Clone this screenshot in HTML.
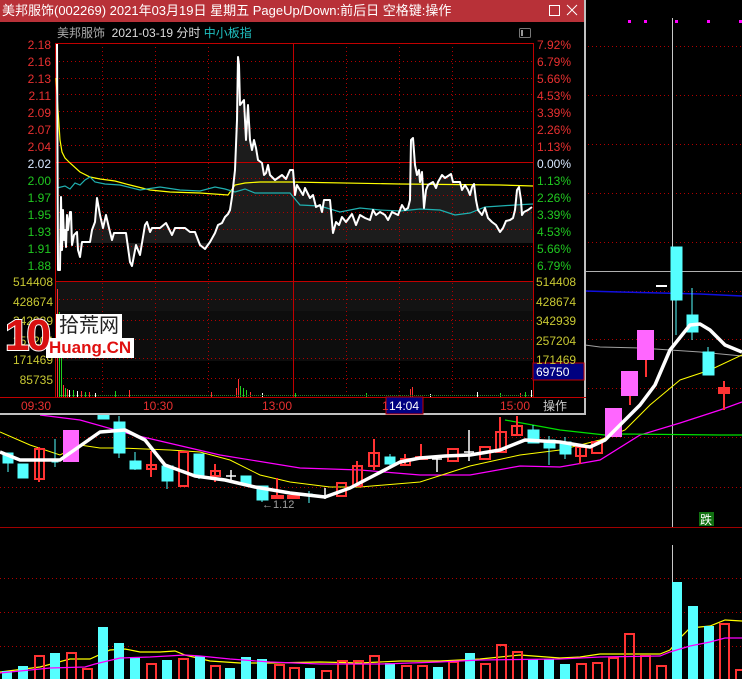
<!DOCTYPE html>
<html><head><meta charset="utf-8"><style>
html,body{margin:0;padding:0;background:#000;width:742px;height:679px;overflow:hidden;font-family:"Liberation Sans","Noto Sans CJK SC",sans-serif;}
svg{position:absolute;left:0;top:0}
.t{position:absolute;white-space:nowrap;font-size:12px;line-height:14px}
</style></head><body>
<svg width="742" height="679" viewBox="0 0 742 679">
<g stroke="#b00000" stroke-dasharray="1 3" stroke-width="1">
<line x1="0" y1="46.5" x2="742" y2="46.5"/><line x1="0" y1="95.5" x2="742" y2="95.5"/><line x1="0" y1="144.5" x2="742" y2="144.5"/><line x1="0" y1="193.5" x2="742" y2="193.5"/><line x1="0" y1="242.5" x2="742" y2="242.5"/><line x1="0" y1="291.5" x2="742" y2="291.5"/><line x1="0" y1="339.5" x2="742" y2="339.5"/><line x1="0" y1="388.5" x2="742" y2="388.5"/><line x1="0" y1="437.5" x2="742" y2="437.5"/><line x1="0" y1="487.5" x2="742" y2="487.5"/>
<line x1="0" y1="578.5" x2="742" y2="578.5"/><line x1="0" y1="612.5" x2="742" y2="612.5"/><line x1="0" y1="646.5" x2="742" y2="646.5"/>
</g>
<line x1="0" y1="527.5" x2="742" y2="527.5" stroke="#a00000"/>
<line x1="672.5" y1="18" x2="672.5" y2="527" stroke="#c8c8c8"/>
<line x1="672.5" y1="545" x2="672.5" y2="679" stroke="#c8c8c8"/>
<g fill="#ff00ff"><rect x="628" y="20" width="3" height="3"/><rect x="644" y="20" width="3" height="3"/><rect x="675" y="20" width="3" height="3"/><rect x="707" y="20" width="3" height="3"/><rect x="739" y="20" width="3" height="3"/></g>
<line x1="585" y1="271.5" x2="742" y2="271.5" stroke="#b0b0b0"/>
<polyline fill="none" stroke="#a0a0a0" points="585,345 600,347 640,348 700,352 742,356"/>
<polyline fill="none" stroke="#1010e0" stroke-width="1.5" points="585,291 620,292 700,294 742,296"/>
<polyline fill="none" stroke="#ff00ff" stroke-width="1.2" points="40,415 80,420 130,434 220,455 300,468 360,470 420,475 470,475 520,466 560,467 600,460 640,435 680,423 720,410 742,402"/>
<polyline fill="none" stroke="#00e000" stroke-width="1.2" points="505,420 560,430 605,435 620,434 720,435 742,435"/>
<polyline fill="none" stroke="#ffff00" stroke-width="1" points="0,432 30,445 60,455 80,445 100,448 120,448 170,450 200,452 230,460 260,475 290,482 330,487 360,487 420,482 470,466 520,455 560,450 600,440 625,430 650,405 680,380 710,370 742,355"/>
<g fill="#55ffff" stroke="#55ffff">
<line x1="8" y1="453" x2="8" y2="472"/><rect x="3" y="453" width="10" height="10"/>
<rect x="18" y="464" width="10" height="14"/>
<line x1="55" y1="439" x2="55" y2="467"/><rect x="52" y="459" width="6" height="3"/>
<rect x="98" y="414" width="11" height="5"/>
<line x1="119" y1="416" x2="119" y2="458"/><rect x="114" y="422" width="11" height="31"/>
<line x1="135" y1="452" x2="135" y2="470"/><rect x="130" y="461" width="11" height="8"/>
<line x1="167" y1="466" x2="167" y2="489"/><rect x="162" y="466" width="11" height="15"/>
<line x1="199" y1="454" x2="199" y2="479"/><rect x="194" y="454" width="10" height="22"/>
<rect x="241" y="476" width="10" height="9"/>
<line x1="262" y1="486" x2="262" y2="502"/><rect x="257" y="486" width="11" height="14"/>
<line x1="309" y1="491" x2="309" y2="503"/><rect x="305" y="494" width="7" height="2"/>
<line x1="390" y1="454" x2="390" y2="468"/><rect x="385" y="457" width="10" height="7"/>
<line x1="533" y1="425" x2="533" y2="443"/><rect x="528" y="430" width="11" height="13"/>
<line x1="549" y1="436" x2="549" y2="465"/><rect x="544" y="440" width="11" height="8"/>
<line x1="565" y1="437" x2="565" y2="459"/><rect x="560" y="442" width="11" height="12"/>
<line x1="676" y1="247" x2="676" y2="335"/><rect x="671" y="247" width="11" height="53"/>
<line x1="692" y1="288" x2="692" y2="340"/><rect x="687" y="315" width="11" height="17"/>
<line x1="708" y1="347" x2="708" y2="375"/><rect x="703" y="352" width="11" height="23"/>
</g>
<g fill="none" stroke="#ff3333" stroke-width="2">
<line x1="39" y1="447" x2="39" y2="482"/><rect x="35" y="449" width="9" height="30"/>
<line x1="151" y1="451" x2="151" y2="477"/><rect x="147" y="465" width="9" height="4"/>
<rect x="179" y="452" width="9" height="34"/>
<line x1="215" y1="464" x2="215" y2="482"/><rect x="211" y="471" width="9" height="5"/>
<line x1="277" y1="478" x2="277" y2="498"/><rect x="272" y="496" width="11" height="2" fill="#ff3333"/>
<rect x="288" y="496" width="11" height="2" fill="#ff3333"/>
<rect x="337" y="483" width="9" height="13"/>
<line x1="357" y1="461" x2="357" y2="486"/><rect x="353" y="466" width="9" height="20"/>
<line x1="374" y1="439" x2="374" y2="470"/><rect x="369" y="453" width="10" height="13"/>
<line x1="405" y1="454" x2="405" y2="465"/><rect x="401" y="459" width="9" height="6"/>
<line x1="421" y1="444" x2="421" y2="459"/><rect x="416" y="457" width="11" height="2" fill="#ff3333"/>
<rect x="448" y="449" width="10" height="12"/>
<rect x="480" y="447" width="10" height="12"/>
<line x1="500" y1="417" x2="500" y2="452"/><rect x="496" y="432" width="10" height="20"/>
<line x1="517" y1="416" x2="517" y2="435"/><rect x="512" y="426" width="10" height="9"/>
<line x1="580" y1="447" x2="580" y2="464"/><rect x="576" y="447" width="10" height="9"/>
<rect x="592" y="442" width="10" height="11"/>
<line x1="724" y1="381" x2="724" y2="410"/><rect x="719" y="388" width="10" height="5" fill="#ff3333"/>
</g>
<g fill="#ff66ff"><rect x="63" y="430" width="16" height="32"/><rect x="605" y="408" width="17" height="29"/><rect x="621" y="371" width="17" height="25"/><rect x="637" y="330" width="17" height="30"/></g>
<g stroke="#ff3333" stroke-width="2"><line x1="630" y1="396" x2="630" y2="405"/><line x1="646" y1="360" x2="646" y2="377"/></g>
<g stroke="#fff" stroke-width="1.5"><line x1="226" y1="476" x2="236" y2="476"/><line x1="231" y1="470" x2="231" y2="482"/><line x1="325" y1="488" x2="325" y2="499"/><line x1="432" y1="459" x2="442" y2="459"/><line x1="437" y1="456" x2="437" y2="472"/><line x1="464" y1="452" x2="474" y2="452"/><line x1="469" y1="430" x2="469" y2="461"/></g>
<rect x="656" y="285" width="11" height="2" fill="#fff"/>
<polyline fill="none" stroke="#fff" stroke-width="3.5" stroke-linejoin="round" points="0,452 20,460 60,460 100,432 125,430 145,440 165,465 195,476 225,480 255,487 290,493 325,497 350,488 375,475 400,462 420,458 445,456 470,455 500,450 525,440 560,442 590,447 605,440 620,425 640,405 655,385 670,350 690,325 700,324 710,330 725,345 742,352"/>
<text x="262" y="508" fill="#a0a0a0" font-size="11" font-family="Liberation Sans">←1.12</text>
<rect x="699" y="512" width="15" height="14" fill="#107010"/><text x="700" y="524" fill="#fff" font-size="12" font-family="Noto Sans CJK SC">跌</text>
<polyline fill="none" stroke="#ffff00" stroke-width="1.2" points="0,672 40,667 70,659 90,659 110,650 125,649 140,652 160,652 175,651 185,655 210,661 240,663 270,663 320,662 360,663 400,661 440,661 480,659 520,655 560,658 580,657 600,654 660,654 670,650 680,638 690,628 710,626 725,620 742,621"/>
<g fill="#55ffff">
<rect x="2" y="671" width="10" height="8"/><rect x="18" y="666" width="10" height="13"/><rect x="50" y="653" width="10" height="26"/><rect x="98" y="627" width="10" height="52"/><rect x="114" y="643" width="10" height="36"/><rect x="130" y="657" width="10" height="22"/><rect x="162" y="660" width="10" height="19"/><rect x="195" y="656" width="10" height="23"/><rect x="225" y="668" width="10" height="11"/><rect x="241" y="657" width="10" height="22"/><rect x="257" y="659" width="10" height="20"/><rect x="305" y="668" width="10" height="11"/><rect x="385" y="663" width="10" height="16"/><rect x="433" y="667" width="10" height="12"/><rect x="465" y="653" width="10" height="26"/><rect x="528" y="659" width="10" height="20"/><rect x="544" y="659" width="10" height="20"/><rect x="560" y="664" width="10" height="15"/><rect x="672" y="582" width="10" height="97"/><rect x="688" y="606" width="10" height="73"/><rect x="704" y="626" width="10" height="53"/>
</g>
<g fill="none" stroke="#ff3333" stroke-width="2">
<rect x="35" y="656" width="9" height="25"/><rect x="67" y="653" width="9" height="28"/><rect x="83" y="669" width="9" height="12"/><rect x="147" y="664" width="9" height="17"/><rect x="179" y="659" width="9" height="22"/><rect x="211" y="666" width="9" height="15"/><rect x="275" y="665" width="9" height="16"/><rect x="290" y="668" width="9" height="13"/><rect x="322" y="671" width="9" height="10"/><rect x="338" y="661" width="9" height="20"/><rect x="354" y="661" width="9" height="20"/><rect x="370" y="656" width="9" height="25"/><rect x="402" y="666" width="9" height="15"/><rect x="418" y="666" width="9" height="15"/><rect x="449" y="662" width="9" height="19"/><rect x="481" y="664" width="9" height="17"/><rect x="497" y="645" width="9" height="36"/><rect x="513" y="652" width="9" height="29"/><rect x="577" y="664" width="9" height="17"/><rect x="593" y="663" width="9" height="18"/><rect x="609" y="658" width="9" height="23"/><rect x="625" y="634" width="9" height="47"/><rect x="641" y="656" width="9" height="25"/><rect x="657" y="666" width="9" height="15"/><rect x="720" y="624" width="9" height="57"/><rect x="736" y="670" width="9" height="11"/>
</g>
<polyline fill="none" stroke="#ff00ff" stroke-width="1.2" points="0,673 50,668 85,667 95,664 120,658 150,657 185,655 200,656 230,659 270,662 320,664 380,664 440,662 480,660 560,659 600,657 660,656 670,652 690,646 710,642 725,638 742,638"/>

<rect x="0" y="0" width="586" height="415" fill="#000"/>
<rect x="584" y="0" width="2" height="415" fill="#c0c0c0"/>
<rect x="0" y="413" width="586" height="2" fill="#c0c0c0"/>
<rect x="0" y="0" width="584" height="22" fill="#b83138"/>
<rect x="55" y="281" width="478" height="30" fill="#131313"/>
<rect x="55" y="311" width="478" height="50" fill="#0d0d0d"/>
<polygon fill="#1c1c1c" points="57,44 58,270 60,270 61,197 62,250 63,210 64,240 65,230 66,247 67,215 68,230 70,212 71,212 72,245 74,235 77,232 78,250 80,257 82,242 90,242 92,230 95,222 97,198 100,215 103,228 106,215 109,228 112,240 114,233 126,233 130,262 132,266 136,245 140,255 145,225 147,222 150,232 152,228 160,228 166,223 172,235 175,228 185,228 190,232 195,232 200,245 205,249 210,242 215,233 218,225 222,223 225,217 228,214 230,210 232,197 235,170 237,120 238,57 239,65 240,105 244,100 246,140 248,105 250,140 252,150 254,140 256,148 258,160 262,163 264,175 266,173 268,165 270,175 275,180 282,175 286,179 290,170 293,170 295,195 297,185 300,190 303,195 305,188 310,198 313,195 316,207 320,205 322,212 324,200 330,200 333,233 336,222 339,225 342,217 346,222 352,214 356,225 360,215 365,218 370,220 373,210 376,215 380,212 385,215 388,220 392,212 398,215 402,205 405,210 408,208 410,200 411,140 413,138 415,165 417,175 419,170 420,182 422,172 424,208 426,190 428,185 433,182 436,188 438,182 442,175 445,178 451,174 453,182 460,182 462,190 465,185 468,190 470,195 472,187 474,184 476,200 478,210 482,215 485,208 488,218 492,222 496,225 500,232 503,228 506,221 510,220 513,218 515,210 517,190 519,187 521,200 522,215 524,212 528,210 532,207 533,243 57,243"/>
<g stroke="#b00000" stroke-dasharray="1 3">
<line x1="55" y1="61.5" x2="533" y2="61.5"/><line x1="55" y1="78.5" x2="533" y2="78.5"/><line x1="55" y1="94.5" x2="533" y2="94.5"/><line x1="55" y1="111.5" x2="533" y2="111.5"/><line x1="55" y1="128.5" x2="533" y2="128.5"/><line x1="55" y1="145.5" x2="533" y2="145.5"/><line x1="55" y1="178.5" x2="533" y2="178.5"/><line x1="55" y1="195.5" x2="533" y2="195.5"/><line x1="55" y1="212.5" x2="533" y2="212.5"/><line x1="55" y1="229.5" x2="533" y2="229.5"/><line x1="55" y1="246.5" x2="533" y2="246.5"/><line x1="55" y1="263.5" x2="533" y2="263.5"/>
<line x1="55" y1="299.5" x2="533" y2="299.5"/><line x1="55" y1="320.5" x2="533" y2="320.5"/><line x1="55" y1="339.5" x2="533" y2="339.5"/><line x1="55" y1="358.5" x2="533" y2="358.5"/><line x1="55" y1="378.5" x2="533" y2="378.5"/>
<line x1="102.5" y1="43" x2="102.5" y2="397"/><line x1="155.5" y1="43" x2="155.5" y2="397"/><line x1="208.5" y1="43" x2="208.5" y2="397"/><line x1="346.5" y1="43" x2="346.5" y2="397"/><line x1="399.5" y1="43" x2="399.5" y2="397"/><line x1="452.5" y1="43" x2="452.5" y2="397"/>
</g>
<g stroke="#c00000"><line x1="55" y1="43.5" x2="533" y2="43.5"/><line x1="55" y1="162.5" x2="533" y2="162.5"/><line x1="55" y1="281.5" x2="533" y2="281.5"/><line x1="0" y1="397.5" x2="586" y2="397.5"/><line x1="55.5" y1="43" x2="55.5" y2="397"/><line x1="533.5" y1="43" x2="533.5" y2="397"/><line x1="293.5" y1="43" x2="293.5" y2="397"/></g>
<polyline fill="none" stroke="#ffff00" stroke-width="1.2" points="56,78 58,110 60,140 62,152 65,158 70,163 80,172 90,177 100,179 115,181 130,185 150,190 170,192 200,193 228,195 235,185 245,183 260,182 290,182 400,184 500,185 533,186"/>
<polyline fill="none" stroke="#20b0b0" stroke-width="1.2" points="57,188 65,186 70,189 75,183 80,185 85,180 90,177 95,182 105,184 120,185 140,190 160,187 180,190 200,191 215,187 225,189 235,192 245,189 255,193 270,193 290,193 300,205 320,206 340,212 360,208 380,210 400,211 420,209 440,210 455,215 470,213 485,207 500,206 515,205 533,204"/>
<polyline fill="none" stroke="#fff" stroke-width="2" stroke-linejoin="round" points="57,44 58,270 60,270 61,197 62,250 63,210 64,240 65,230 66,247 67,215 68,230 70,212 71,212 72,245 74,235 77,232 78,250 80,257 82,242 90,242 92,230 95,222 97,198 100,215 103,228 106,215 109,228 112,240 114,233 126,233 130,262 132,266 136,245 140,255 145,225 147,222 150,232 152,228 160,228 166,223 172,235 175,228 185,228 190,232 195,232 200,245 205,249 210,242 215,233 218,225 222,223 225,217 228,214 230,210 232,197 235,170 237,120 238,57 239,65 240,105 244,100 246,140 248,105 250,140 252,150 254,140 256,148 258,160 262,163 264,175 266,173 268,165 270,175 275,180 282,175 286,179 290,170 293,170 295,195 297,185 300,190 303,195 305,188 310,198 313,195 316,207 320,205 322,212 324,200 330,200 333,233 336,222 339,225 342,217 346,222 352,214 356,225 360,215 365,218 370,220 373,210 376,215 380,212 385,215 388,220 392,212 398,215 402,205 405,210 408,208 410,200 411,140 413,138 415,165 417,175 419,170 420,182 422,172 424,208 426,190 428,185 433,182 436,188 438,182 442,175 445,178 451,174 453,182 460,182 462,190 465,185 468,190 470,195 472,187 474,184 476,200 478,210 482,215 485,208 488,218 492,222 496,225 500,232 503,228 506,221 510,220 513,218 515,210 517,190 519,187 521,200 522,215 524,212 528,210 532,207"/>
<g stroke-width="1">
<line x1="57.5" y1="289" x2="57.5" y2="397" stroke="#ff3030"/><line x1="59.5" y1="312" x2="59.5" y2="397" stroke="#20d020"/><line x1="61.5" y1="350" x2="61.5" y2="397" stroke="#20d020"/><line x1="63.5" y1="385" x2="63.5" y2="397" stroke="#ff3030"/><line x1="65.5" y1="388" x2="65.5" y2="397" stroke="#20d020"/><line x1="67.5" y1="389" x2="67.5" y2="397" stroke="#ff3030"/><line x1="69.5" y1="390" x2="69.5" y2="397" stroke="#fff"/><line x1="73.5" y1="390" x2="73.5" y2="397" stroke="#20d020"/><line x1="77.5" y1="391" x2="77.5" y2="397" stroke="#fff"/><line x1="81.5" y1="391" x2="81.5" y2="397" stroke="#ff3030"/><line x1="85.5" y1="392" x2="85.5" y2="397" stroke="#20d020"/><line x1="89.5" y1="392" x2="89.5" y2="397" stroke="#ff3030"/><line x1="95.5" y1="393" x2="95.5" y2="397" stroke="#fff"/><line x1="115.5" y1="391" x2="115.5" y2="397" stroke="#20d020"/><line x1="129.5" y1="390" x2="129.5" y2="397" stroke="#ff3030"/><line x1="211.5" y1="392" x2="211.5" y2="397" stroke="#ff3030"/><line x1="236.5" y1="388" x2="236.5" y2="397" stroke="#ff3030"/><line x1="238.5" y1="379" x2="238.5" y2="397" stroke="#ff3030"/><line x1="240.5" y1="386" x2="240.5" y2="397" stroke="#20d020"/><line x1="243.5" y1="388" x2="243.5" y2="397" stroke="#20d020"/><line x1="246.5" y1="390" x2="246.5" y2="397" stroke="#20d020"/><line x1="250.5" y1="392" x2="250.5" y2="397" stroke="#ff3030"/><line x1="262.5" y1="393" x2="262.5" y2="397" stroke="#fff"/><line x1="295.5" y1="393" x2="295.5" y2="397" stroke="#20d020"/><line x1="366.5" y1="393" x2="366.5" y2="397" stroke="#20d020"/><line x1="410.5" y1="389" x2="410.5" y2="397" stroke="#ff3030"/><line x1="412.5" y1="387" x2="412.5" y2="397" stroke="#ff3030"/><line x1="430.5" y1="394" x2="430.5" y2="397" stroke="#fff"/><line x1="477.5" y1="392" x2="477.5" y2="397" stroke="#fff"/><line x1="500.5" y1="393" x2="500.5" y2="397" stroke="#20d020"/><line x1="520.5" y1="393" x2="520.5" y2="397" stroke="#ff3030"/><line x1="525.5" y1="392" x2="525.5" y2="397" stroke="#20d020"/><line x1="531.5" y1="390" x2="531.5" y2="397" stroke="#fff"/>
</g>
<line x1="60" y1="395.5" x2="533" y2="395.5" stroke="#208020" stroke-dasharray="1 1"/>
<rect x="533" y="363" width="51" height="17" fill="#000080" stroke="#c00000"/>
<rect x="386" y="397" width="37" height="17" fill="#000080" stroke="#c00000"/>
<rect x="549.5" y="5.5" width="10" height="10" fill="none" stroke="#fff"/>
<path d="M567 5 L577 15 M577 5 L567 15" stroke="#fff" stroke-width="1"/>
<rect x="519.5" y="28.5" width="11" height="9" fill="none" stroke="#777" rx="1"/><rect x="521" y="30" width="2" height="6" fill="#999"/>
</svg>

<div class="t" style="left:2px;top:4px;color:#fff;font-size:13px">美邦服饰(002269) 2021年03月19日 星期五 PageUp/Down:前后日 空格键:操作</div>
<div class="t" style="left:57px;top:26px;color:#aaa">美邦服饰&nbsp;&nbsp;<span style="color:#ddd">2021-03-19 分时</span>&nbsp;<span style="color:#20c0c0">中小板指</span></div>

<div class="t" style="left:0;top:37px;width:51px;text-align:right;color:#e83030;line-height:17px">2.18<br>2.16<br>2.13<br>2.11<br>2.09<br>2.07<br>2.04<br><span style="color:#d8e8ff">2.02</span><br><span style="color:#20c820">2.00<br>1.97<br>1.95<br>1.93<br>1.91<br>1.88</span></div>
<div class="t" style="left:537px;top:37px;color:#e83030;line-height:17px">7.92%<br>6.79%<br>5.66%<br>4.53%<br>3.39%<br>2.26%<br>1.13%<br><span style="color:#d8e8ff">0.00%</span><br><span style="color:#20c820">1.13%<br>2.26%<br>3.39%<br>4.53%<br>5.66%<br>6.79%</span></div>
<div class="t" style="left:0;top:273px;width:53px;text-align:right;color:#c8c832;line-height:19.5px">514408<br>428674<br>342939<br>257204<br>171469<br>85735</div>
<div class="t" style="left:536px;top:273px;color:#c8c832;line-height:19.5px">514408<br>428674<br>342939<br>257204<br>171469</div>
<div class="t" style="left:536px;top:365px;color:#fff">69750</div>
<div class="t" style="left:21px;top:399px;color:#e83030">09:30</div>
<div class="t" style="left:143px;top:399px;color:#e83030">10:30</div>
<div class="t" style="left:262px;top:399px;color:#e83030">13:00</div>
<div class="t" style="left:382px;top:399px;color:#e83030">1</div>
<div class="t" style="left:389px;top:399px;color:#fff">14:04</div>
<div class="t" style="left:500px;top:399px;color:#e83030">15:00</div>
<div class="t" style="left:543px;top:399px;color:#ccc">操作</div>

<div class="t" style="left:56px;top:314px;background:#fff;color:#222;font-size:20px;line-height:24px;padding:0 3px">拾荒网</div>
<div class="t" style="left:46px;top:338px;background:#fff;color:#e01010;font-size:17px;line-height:20px;padding:0 3px;font-weight:bold">Huang.CN</div>
<div class="t" style="left:5px;top:313px;color:#d81010;font-size:44px;line-height:46px;font-weight:bold;letter-spacing:-3px;-webkit-text-stroke:2px #fff;paint-order:stroke fill">10</div>
</body></html>
